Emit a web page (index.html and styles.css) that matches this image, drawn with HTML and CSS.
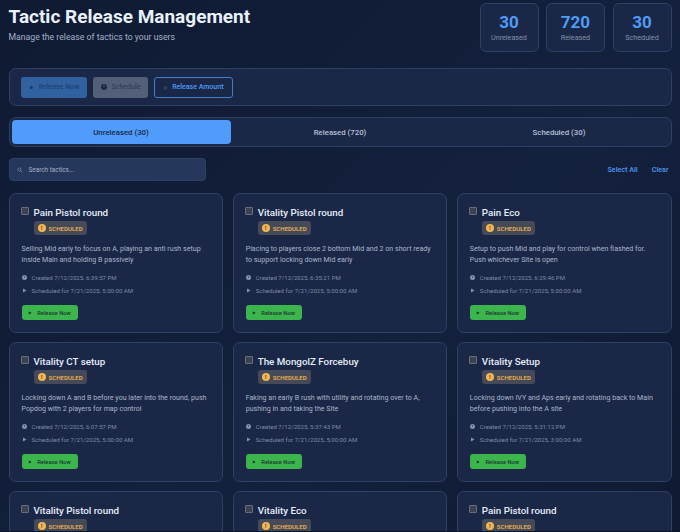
FILE: index.html
```html
<!DOCTYPE html>
<html>
<head>
    <title>Tactic Release Management</title>
    <link rel="stylesheet" href="styles.css">
</head>
<body>
    <div class="header">
        <div>
            <h1>Tactic Release Management</h1>
            <p class="subtitle">Manage the release of tactics to your users</p>
        </div>
        <div class="stats">
            <div class="stat"><b>30</b><span>Unreleased</span></div>
            <div class="stat"><b>720</b><span>Released</span></div>
            <div class="stat"><b>30</b><span>Scheduled</span></div>
        </div>
    </div>

    <div class="toolbar">
        <button class="tool-btn release-all"><svg class="play" viewBox="0 0 10 10"><path d="M2 1l7 4-7 4z"/></svg>Release Now</button>
        <button class="tool-btn schedule-all"><svg class="clock" viewBox="0 0 10 10"><circle cx="5" cy="5" r="5"/><path d="M5 2v3.4" stroke="#66718a" stroke-width="1.2"/></svg>Schedule</button>
        <button class="tool-btn amount"><span class="hash">#</span>Release Amount</button>
    </div>

    <div class="tabs">
        <div class="tab active">Unreleased (30)</div>
        <div class="tab">Released (720)</div>
        <div class="tab">Scheduled (30)</div>
    </div>

    <div class="search-row">
        <div class="search">
            <svg viewBox="0 0 12 12"><circle cx="5" cy="5" r="3.2"/><path d="M7.5 7.5L11 11"/></svg>
            <span>Search tactics...</span>
        </div>
        <div class="links"><a>Select All</a><a>Clear</a></div>
    </div>

    <div class="grid">
        <div class="card">
            <div class="card-top"><i class="check"></i><h3>Pain Pistol round</h3></div>
            <div class="badge"><i>!</i>SCHEDULED</div>
            <p class="desc">Selling Mid early to focus on A, playing an anti rush setup inside Main and holding B passively</p>
            <div class="meta"><svg class="clock" viewBox="0 0 10 10"><circle cx="5" cy="5" r="5"/><path d="M5 2v3.4" stroke="#1a2747" stroke-width="1.2"/></svg>Created 7/12/2025, 6:39:57 PM</div>
            <div class="meta"><svg class="play" viewBox="0 0 10 10"><path d="M2 1l7 4-7 4z"/></svg>Scheduled for 7/21/2025, 5:00:00 AM</div>
            <button class="release"><svg class="play" viewBox="0 0 10 10"><path d="M2 1l7 4-7 4z"/></svg>Release Now</button>
        </div>
        <div class="card">
            <div class="card-top"><i class="check"></i><h3>Vitality Pistol round</h3></div>
            <div class="badge"><i>!</i>SCHEDULED</div>
            <p class="desc">Placing to players close 2 bottom Mid and 2 on short ready to support locking down Mid early</p>
            <div class="meta"><svg class="clock" viewBox="0 0 10 10"><circle cx="5" cy="5" r="5"/><path d="M5 2v3.4" stroke="#1a2747" stroke-width="1.2"/></svg>Created 7/12/2025, 6:35:21 PM</div>
            <div class="meta"><svg class="play" viewBox="0 0 10 10"><path d="M2 1l7 4-7 4z"/></svg>Scheduled for 7/21/2025, 5:00:00 AM</div>
            <button class="release"><svg class="play" viewBox="0 0 10 10"><path d="M2 1l7 4-7 4z"/></svg>Release Now</button>
        </div>
        <div class="card">
            <div class="card-top"><i class="check"></i><h3>Pain Eco</h3></div>
            <div class="badge"><i>!</i>SCHEDULED</div>
            <p class="desc">Setup to push Mid and play for control when flashed for.<br>Push whichever Site is open</p>
            <div class="meta"><svg class="clock" viewBox="0 0 10 10"><circle cx="5" cy="5" r="5"/><path d="M5 2v3.4" stroke="#1a2747" stroke-width="1.2"/></svg>Created 7/12/2025, 6:29:46 PM</div>
            <div class="meta"><svg class="play" viewBox="0 0 10 10"><path d="M2 1l7 4-7 4z"/></svg>Scheduled for 7/21/2025, 5:00:00 AM</div>
            <button class="release"><svg class="play" viewBox="0 0 10 10"><path d="M2 1l7 4-7 4z"/></svg>Release Now</button>
        </div>
        <div class="card">
            <div class="card-top"><i class="check"></i><h3>Vitality CT setup</h3></div>
            <div class="badge"><i>!</i>SCHEDULED</div>
            <p class="desc">Locking down A and B before you later into the round, push Popdog with 2 players for map control</p>
            <div class="meta"><svg class="clock" viewBox="0 0 10 10"><circle cx="5" cy="5" r="5"/><path d="M5 2v3.4" stroke="#1a2747" stroke-width="1.2"/></svg>Created 7/12/2025, 6:07:57 PM</div>
            <div class="meta"><svg class="play" viewBox="0 0 10 10"><path d="M2 1l7 4-7 4z"/></svg>Scheduled for 7/21/2025, 5:00:00 AM</div>
            <button class="release"><svg class="play" viewBox="0 0 10 10"><path d="M2 1l7 4-7 4z"/></svg>Release Now</button>
        </div>
        <div class="card">
            <div class="card-top"><i class="check"></i><h3>The MongolZ Forcebuy</h3></div>
            <div class="badge"><i>!</i>SCHEDULED</div>
            <p class="desc">Faking an early B rush with utility and rotating over to A,<br>pushing in and taking the Site</p>
            <div class="meta"><svg class="clock" viewBox="0 0 10 10"><circle cx="5" cy="5" r="5"/><path d="M5 2v3.4" stroke="#1a2747" stroke-width="1.2"/></svg>Created 7/12/2025, 5:37:43 PM</div>
            <div class="meta"><svg class="play" viewBox="0 0 10 10"><path d="M2 1l7 4-7 4z"/></svg>Scheduled for 7/21/2025, 5:00:00 AM</div>
            <button class="release"><svg class="play" viewBox="0 0 10 10"><path d="M2 1l7 4-7 4z"/></svg>Release Now</button>
        </div>
        <div class="card">
            <div class="card-top"><i class="check"></i><h3>Vitality Setup</h3></div>
            <div class="badge"><i>!</i>SCHEDULED</div>
            <p class="desc">Locking down IVY and Aps early and rotating back to Main before pushing into the A site</p>
            <div class="meta"><svg class="clock" viewBox="0 0 10 10"><circle cx="5" cy="5" r="5"/><path d="M5 2v3.4" stroke="#1a2747" stroke-width="1.2"/></svg>Created 7/12/2025, 5:31:12 PM</div>
            <div class="meta"><svg class="play" viewBox="0 0 10 10"><path d="M2 1l7 4-7 4z"/></svg>Scheduled for 7/21/2025, 3:00:00 AM</div>
            <button class="release"><svg class="play" viewBox="0 0 10 10"><path d="M2 1l7 4-7 4z"/></svg>Release Now</button>
        </div>
        <div class="card">
            <div class="card-top"><i class="check"></i><h3>Vitality Pistol round</h3></div>
            <div class="badge"><i>!</i>SCHEDULED</div>
        </div>
        <div class="card">
            <div class="card-top"><i class="check"></i><h3>Vitality Eco</h3></div>
            <div class="badge"><i>!</i>SCHEDULED</div>
        </div>
        <div class="card">
            <div class="card-top"><i class="check"></i><h3>Pain Pistol round</h3></div>
            <div class="badge"><i>!</i>SCHEDULED</div>
        </div>
    </div>
    <div class="bottom-edge"></div>
</body>
</html>
```

FILE: styles.css
```css
/* General */
html, body {
    height: 532px;
    overflow: hidden;
}

body {
    position: relative;
    margin: 0;
    padding: 3px 8.5px 0 8.5px;
    box-sizing: border-box;
    font-family: Roboto, "Noto Sans", Arial, sans-serif;
    color: #e6edf8;
    background: linear-gradient(135deg, #0f1a32, #14213d 60%, #0f1a32);
}

button {
    font-family: inherit;
    cursor: pointer;
}

.bottom-edge {
    position: absolute;
    left: 0;
    right: 0;
    bottom: 0;
    height: 1.5px;
    background: #0d1424;
}

/* Header */
.header {
    display: flex;
    justify-content: space-between;
    align-items: flex-start;
    height: 49px;
    margin-bottom: 16px;
}

h1 {
    margin: 0;
    font-size: 19px;
    line-height: 27px;
    font-weight: 700;
    color: #e9f1fb;
}

.subtitle {
    margin: 1px 0 0;
    font-size: 8.7px;
    line-height: 12px;
    color: #a3b0c6;
}

.stats {
    display: flex;
    gap: 7.5px;
}

.stat {
    width: 59px;
    height: 49px;
    box-sizing: border-box;
    border: 1px solid #2d4166;
    border-radius: 6px;
    background: #1a2747;
    display: flex;
    flex-direction: column;
    align-items: center;
    padding-top: 8px;
}

.stat b {
    font-size: 17px;
    line-height: 20px;
    color: #4f9cf5;
}

.stat span {
    font-size: 7.2px;
    line-height: 11px;
    color: #8492ab;
}

/* Toolbar */
.toolbar {
    display: flex;
    align-items: center;
    gap: 6px;
    height: 38px;
    box-sizing: border-box;
    padding: 0 11.5px;
    margin-bottom: 11px;
    border: 1px solid #2d4166;
    border-radius: 7px;
    background: #1a2747;
}

.tool-btn {
    height: 21px;
    display: flex;
    align-items: center;
    justify-content: center;
    gap: 5px;
    padding: 0;
    border: 0;
    border-radius: 3px;
    font-size: 7px;
    font-weight: 500;
    white-space: nowrap;
}

.tool-btn .play { width: 5px; height: 5px; fill: #1d3a66; }
.tool-btn .clock { width: 6px; height: 6px; fill: #1a2747; }

.release-all {
    width: 66px;
    background: #32619f;
    color: #1f4475;
}

.schedule-all {
    width: 55px;
    background: #535f79;
    color: #323d55;
}

.amount {
    width: 79px;
    background: #1a2747;
    color: #4f9cf5;
    border: 1px solid #3f7fcb;
}

.hash {
    color: #3d5069;
    font-size: 6px;
}

/* Tabs */
.tabs {
    display: flex;
    height: 30px;
    box-sizing: border-box;
    padding: 2px;
    margin-bottom: 11px;
    border: 1px solid #2d4166;
    border-radius: 7px;
    background: #1a2747;
}

.tab {
    flex: 1;
    display: flex;
    align-items: center;
    justify-content: center;
    border-radius: 4px;
    font-size: 7.8px;
    font-weight: 500;
    color: #b5c1d6;
}

.tab.active {
    background: #4f9cfb;
    color: #1a2747;
}

/* Search */
.search-row {
    display: flex;
    justify-content: space-between;
    align-items: center;
    height: 23px;
    margin-bottom: 12px;
}

.search {
    width: 197px;
    height: 23px;
    box-sizing: border-box;
    display: flex;
    align-items: center;
    gap: 6px;
    padding-left: 7px;
    border: 1px solid #2d4166;
    border-radius: 4px;
    background: #25375a;
    font-size: 6.4px;
    color: #a3b0c6;
}

.search svg {
    width: 6px;
    height: 6px;
    fill: none;
    stroke: #8492ab;
    stroke-width: 1.4;
}

.links {
    display: flex;
    gap: 14px;
    padding-right: 3px;
    font-size: 7.2px;
    font-weight: 500;
    color: #4f9cf5;
}

/* Cards */
.grid {
    display: grid;
    grid-template-columns: repeat(3, 1fr);
    grid-auto-rows: 139.5px;
    gap: 9.5px;
}

.card {
    box-sizing: border-box;
    padding: 11px 9px 11px 12px;
    border: 1px solid #2d4166;
    border-radius: 7px;
    background: #1a2747;
}

.card-top {
    display: flex;
    gap: 5px;
    margin-left: -1px;
}

.check {
    width: 6px;
    height: 6px;
    margin-top: 2px;
    border: 1px solid #666e7c;
    border-radius: 1px;
    background: #3b4352;
}

h3 {
    margin: 0;
    font-size: 9.8px;
    line-height: 15px;
    font-weight: 500;
    color: #e6edf8;
}

.badge {
    display: flex;
    align-items: center;
    gap: 3px;
    width: 53px;
    height: 14px;
    box-sizing: border-box;
    margin: 1px 0 0 12px;
    padding-left: 4px;
    border-radius: 3px;
    background: #454a58;
    font-size: 6.1px;
    font-weight: 500;
    color: #f5b64f;
}

.badge i {
    width: 8px;
    height: 8px;
    border-radius: 50%;
    background: #f5b64f;
    color: #454a58;
    font-style: normal;
    font-size: 6px;
    line-height: 8px;
    text-align: center;
    font-weight: 700;
}

.desc {
    margin: 8px 0 6px;
    height: 22px;
    font-size: 7.1px;
    line-height: 11px;
    color: #aab5ca;
}

.meta {
    display: flex;
    align-items: center;
    gap: 5px;
    height: 13px;
    font-size: 6.1px;
    color: #7d8ba5;
}

.meta svg {
    width: 5px;
    height: 5px;
    fill: #8492ab;
}

.release {
    display: flex;
    align-items: center;
    justify-content: center;
    gap: 5px;
    width: 56px;
    height: 15px;
    margin-top: 8px;
    padding: 0;
    border: 0;
    border-radius: 3px;
    background: #3cb54d;
    color: #1a3a34;
    font-size: 5.8px;
    font-weight: 500;
}

.release .play {
    width: 4px;
    height: 4px;
    fill: #12302a;
}
```
